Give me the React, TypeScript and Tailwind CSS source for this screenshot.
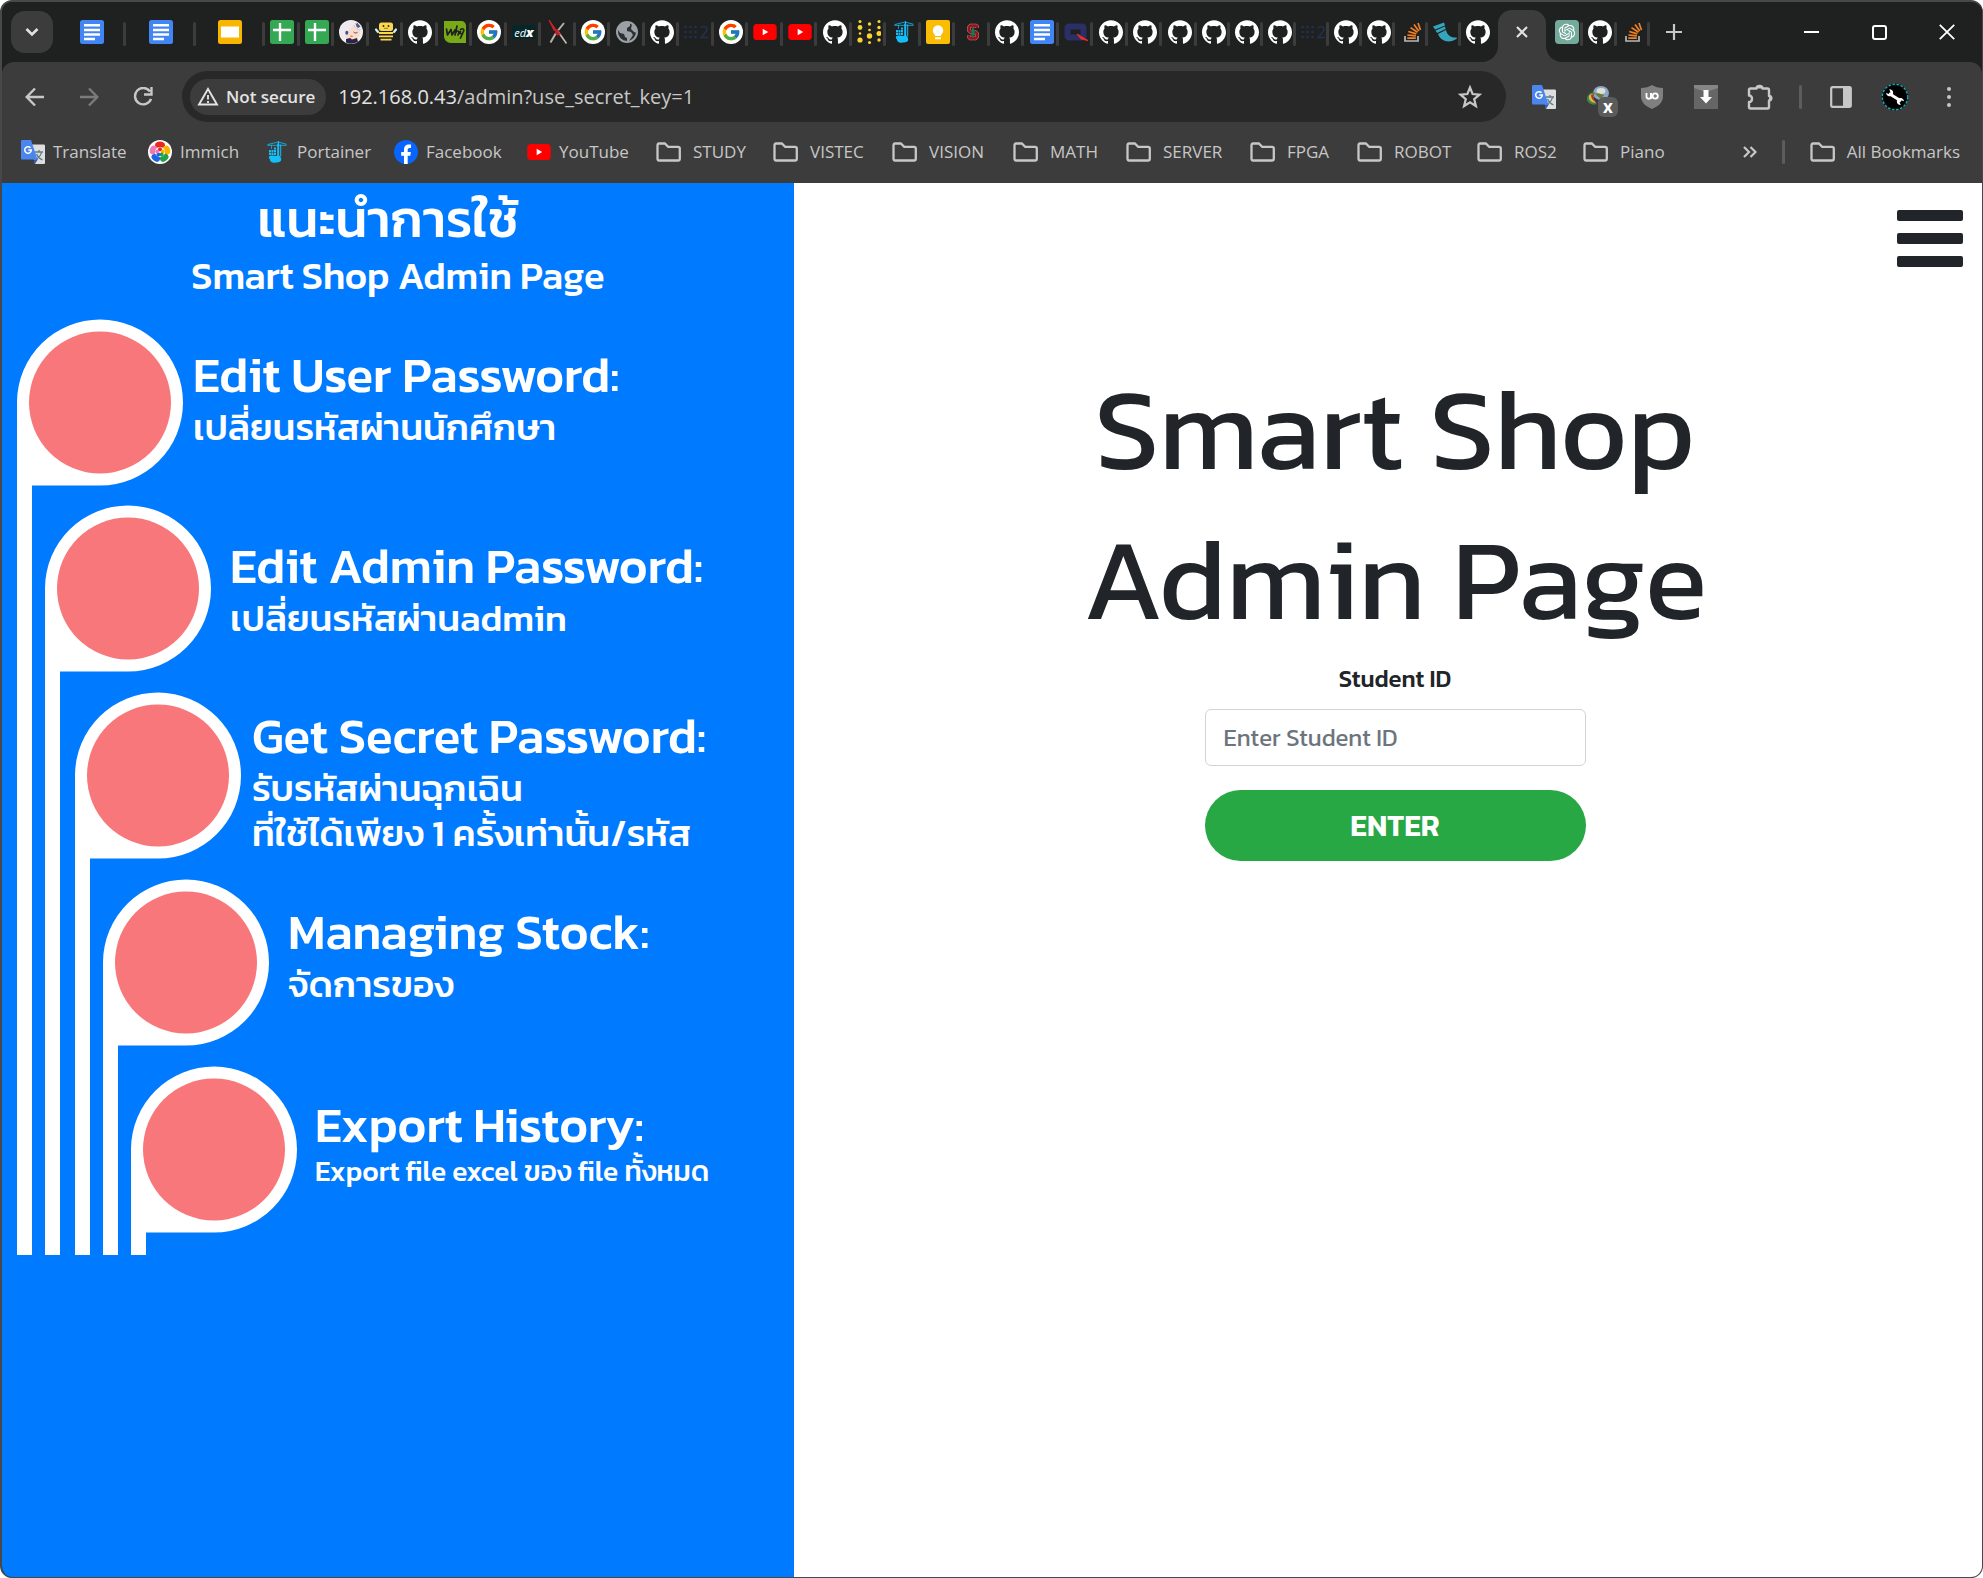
import React from "react";
import type { ReactNode } from "react";
import { SiGithub } from "react-icons/si";
import { FcGoogle } from "react-icons/fc";
import { RiOpenaiFill } from "react-icons/ri";

type IconProps = { className?: string };

function Docs() {
  return (
    <svg viewBox="0 0 24 24" className="size-6">
      <rect width="24" height="24" rx="2.5" fill="#4285f4" />
      <path d="M4 5.3h16M4 10h16M4 14.5h16M4 19h11" stroke="#fff" strokeWidth="2.4" />
    </svg>
  );
}

function Slides() {
  return (
    <svg viewBox="0 0 24 24" className="size-6">
      <rect width="24" height="24" rx="2.5" fill="#f9b600" />
      <rect x="3" y="6.5" width="18" height="11" fill="#fff" />
    </svg>
  );
}

function Sheets() {
  return (
    <svg viewBox="0 0 24 24" className="size-6">
      <rect width="24" height="24" rx="2.5" fill="#34a853" />
      <path d="M10 3v18M3 10h18" stroke="#fff" strokeWidth="2.400" />
    </svg>
  );
}

function Portrait() {
  return (
    <svg viewBox="0 0 24 24" className="size-6">
      <circle cx="12" cy="12" r="12" fill="#f4efee" />
      <path d="M5 13c0-4 3-7 8-7s8 3 8 7-4 7-8 7-8-3-8-7z" fill="#fbdcc8" />
      <path d="M1 9c2-6 7-8.500 12-8 5 0 8 4 9.500 9-4 1-7-1-9-4-1 3-5 5-7 5.500L5.500 20C2 17 0 13 1 9z" fill="#eeeaf0" />
      <path d="M14.500 5c1.500 3 4 5 7 5" stroke="#bfb4c4" strokeWidth="0.700" fill="none" />
      <path d="M18 2.500l3.500 4-2.500 1.500-2-2z" fill="#4d5c94" />
      <path d="M16.500 3l2 1.500-1.500 1z" fill="#b34a5c" />
      <ellipse cx="7.800" cy="12.800" rx="1.500" ry="2" fill="#3553a0" />
      <path d="M14.500 12c1.200 1.200 2.700 1.200 4 .3" stroke="#60405a" strokeWidth="1" fill="none" />
      <ellipse cx="12.500" cy="16.300" rx="1.400" ry="1" fill="#e58a80" />
      <path d="M7 19l4-1 2 1.500 5-1.500 1 3.500c-4 2.500-8 3-12 1z" fill="#2b2448" />
    </svg>
  );
}

function Bee() {
  return (
    <svg viewBox="0 0 24 24" className="size-6">
      <rect x="5" y="2.500" width="14" height="8.500" rx="2.500" fill="#fbd84b" />
      <circle cx="9.500" cy="6" r="0.900" fill="#222" />
      <circle cx="14.500" cy="6" r="0.900" fill="#222" />
      <path d="M10 8.300h4" stroke="#7a6a28" strokeWidth="0.800" />
      <path d="M2 9.500l2 2.500M22 9.500l-2 2.500" stroke="#d8ecef" strokeWidth="2.200" strokeLinecap="round" />
      <path d="M5 13h14M5 16.300h14M6.500 19.600h11" stroke="#fbd84b" strokeWidth="1.800" />
    </svg>
  );
}

function GitHub() {
  return <SiGithub className="size-6 text-white" />;
}

function Leaf() {
  return (
    <svg viewBox="0 0 24 24" className="size-6">
      <path d="M1 1h17c3 0 5 2 5 5v17H8c-4 0-7-3-7-7z" fill="#78a916" />
      <path d="M3.500 9l1 6L8 9.500 9 15l3-5M14 6l-2 9M12.800 12.500c1.200-2 3.500-2 3 0L15 15M17.500 9.500c2-1.500 3.800-.500 3.200 1.500L17.500 18M17.500 11.500l-.5 2 2.500.500" stroke="#1f2120" strokeWidth="1.700" fill="none" strokeLinejoin="round" strokeLinecap="round" />
    </svg>
  );
}

function Google() {
  return (
    <span className="flex size-6 items-center justify-center rounded-full bg-white">
      <FcGoogle className="size-5" />
    </span>
  );
}

function Edx() {
  return (
    <span className="flex h-3.5 w-6 items-center justify-center bg-[#06262a] font-['Open_Sans'] text-[11px] leading-none text-white italic">
      ed<span className="text-[13px] font-extrabold">x</span>
    </span>
  );
}

function CrossMark() {
  return (
    <svg viewBox="0 0 24 24" className="size-6">
      <path d="M18 3L12 10.500M10 13l-5.500 9.500" stroke="#b9b1a8" strokeWidth="2" />
      <path d="M12 11.500l8.500 12" stroke="#c8bdb3" strokeWidth="1.600" />
      <path d="M3 0l7 10 4 4-3 1 2-2-5-3z" fill="#c5222c" stroke="#c5222c" strokeWidth="1.200" />
      <path d="M12 10l-2 4" stroke="#c5222c" strokeWidth="2.500" />
    </svg>
  );
}

function Globe() {
  return (
    <svg viewBox="0 0 24 24" className="size-6">
      <circle cx="12" cy="12" r="10" fill="#2d3032" stroke="#9aa0a6" strokeWidth="2" />
      <path d="M2.500 9C4 5 8 2 12 2l3 1v3l-3 2v3l4 1 2 3-2 3-2 3h-2v-3l-2-1-1-3-4-1z" fill="#9aa0a6" />
      <path d="M17 4l4 4 1 5-3-1-3-3z" fill="#9aa0a6" />
    </svg>
  );
}

function Ros() {
  return (
    <svg viewBox="0 0 24 24" className="size-6">
      <g fill="#22314e">
        {[1.5, 6.5, 11.5].map((x) => [7, 12, 17].map((y) => <circle key={`${x}-${y}`} cx={x} cy={y} r="1.300" />))}
      </g>
      <path d="M17 8c1-2 6-2 6 1 0 2-2 4-6 8.500h7" stroke="#22314e" strokeWidth="1.500" fill="none" />
    </svg>
  );
}

function YouTube() {
  return (
    <svg viewBox="0 0 24 24" className="size-6">
      <rect x="0.300" y="4" width="23.400" height="16" rx="3.500" fill="#f00" />
      <path d="M9.700 8.800v6.400l5.500-3.200z" fill="#fff" />
    </svg>
  );
}

function Dots() {
  return (
    <svg viewBox="0 0 24 24" className="size-6" fill="#fdd32f">
      <circle cx="3" cy="1.500" r="1.500" />
      <circle cx="3" cy="7.500" r="2.400" />
      <circle cx="3" cy="13.500" r="1.300" />
      <circle cx="3" cy="20" r="2.600" />
      <circle cx="12.500" cy="4" r="1.700" />
      <circle cx="12.500" cy="10" r="1.300" />
      <circle cx="12.500" cy="16" r="2.700" />
      <circle cx="12.500" cy="22.500" r="1.500" />
      <circle cx="22" cy="1.500" r="1.500" />
      <circle cx="22" cy="7.500" r="1.700" />
      <circle cx="22" cy="13.500" r="2.500" />
      <circle cx="22" cy="20" r="1.700" />
    </svg>
  );
}

function Portainer() {
  return (
    <svg viewBox="0 0 24 24" className="size-6" fill="#13bef9">
      <path d="M12.200 3.500h2v13h-2zM15.200 4.500h1v12h-1z" />
      <path d="M2.500 4.600L13.200 2l8.300 2.300M2.500 5.300h19" stroke="#13bef9" strokeWidth="0.800" fill="none" />
      <path d="M13 1h1v4h-1zM6 5h0.700v4H6z" />
      <path d="M4 10h2v2.200H4zM6.500 10h2v2.200h-2zM9 10h2v2.200H9zM9 7.400h2v2.200H9zM4 12.700h2v2.200H4zM6.500 12.700h2v2.200h-2zM9 12.700h2v2.200H9z" />
      <path d="M4 16.500c2-1.500 5-1 7-.500 3-1.500 5 .500 5 2.500 1 3-2 4-5 4-4 1-6-1-6-3-1-1-1.500-2-1-3z" />
    </svg>
  );
}

function Keep() {
  return (
    <svg viewBox="0 0 24 24" className="size-6">
      <rect width="24" height="24" rx="2" fill="#fbbc04" />
      <circle cx="12" cy="10.500" r="5.200" fill="#fff" />
      <path d="M9 13h6v3H9zM9 17.200h6v2H9z" fill="#fff" />
    </svg>
  );
}

function Stanford() {
  return (
    <svg viewBox="-3 -3 30 30" className="size-6">
      <path d="M17 7V5l-1.500-1H9L7 6v4l2 2h6l2 2v4l-2 2H8.500L7 18.500V16" stroke="#c9787c" strokeWidth="4.500" fill="none" />
      <path d="M17 7V5l-1.500-1H9L7 6v4l2 2h6l2 2v4l-2 2H8.500L7 18.500V16" stroke="#981318" strokeWidth="3.200" fill="none" />
      <path d="M12 5l2.500 6-1 1 1.500 4-2.200.500V19h-1.600v-2.500L9 16l1.500-4-1-1z" fill="#0f7a5a" />
    </svg>
  );
}

function QMark() {
  return (
    <svg viewBox="0 0 24 24" className="size-6">
      <rect x="3.500" y="6.500" width="16" height="11" rx="1.500" fill="none" stroke="#2a2f66" strokeWidth="6" />
      <path d="M13 14l11 6.500-7-1.500z" fill="#ee2b2b" stroke="#ee2b2b" />
    </svg>
  );
}

function StackOverflow() {
  return (
    <svg viewBox="0 0 24 24" className="size-6" fill="none">
      <path d="M5 16v5h13v-5" stroke="#b7b9bb" strokeWidth="1.700" />
      <path d="M7.300 18.200h8.500M7.400 15l8.400.900M8.300 11.500l8 2.400M10.500 7.600l7 4.700M14 4.500l4.800 6.500M18 3l2.500 7" stroke="#f48024" strokeWidth="1.700" />
    </svg>
  );
}

function Flask() {
  return (
    <svg viewBox="0 0 24 24" className="size-6" fill="#35a5bd">
      <path d="M0 6.500l11-4 1 3L2 9.500zM2.500 10.500L12 6.500l.600 2.500-8.500 4zM5 14l8-4c1 5 5 8 10.500 7.500l.500 1C17 23.500 8 22 5 14z" />
    </svg>
  );
}

function ChatGpt() {
  return (
    <span className="flex size-6 items-center justify-center rounded-sm bg-[#74aa9c]">
      <RiOpenaiFill className="size-5 text-white" />
    </span>
  );
}

function Translate() {
  return (
    <svg viewBox="0 0 24 24" className="size-6">
      <path d="M10 4.500h12.500c1 0 1.500.500 1.500 1.500v16.500c0 1-.500 1.500-1.500 1.500H14z" fill="#dedede" />
      <path d="M14 12h8M18 10v2M20.500 12c-.500 3-3 6-5.500 7.500M15.500 14c1 2.500 3.500 5 6 6" stroke="#607d8b" strokeWidth="1.300" fill="none" />
      <path d="M12.500 19.500L17 19l-3 5z" fill="#3257b5" />
      <path d="M1.500 0H10l6.500 19.500h-15C.500 19.500 0 19 0 18V1.500C0 .500.500 0 1.500 0z" fill="#4a86ee" />
      <path d="M9.500 7.800A3.300 3.300 0 1 0 10.300 10H7.300" stroke="#fff" strokeWidth="1.500" fill="none" />
    </svg>
  );
}

function Immich() {
  return (
    <svg viewBox="0 0 24 24" className="size-6">
      <circle cx="12" cy="12" r="12" fill="#fff" />
      <ellipse cx="12" cy="5" rx="5" ry="3.400" fill="#e8281e" />
      <ellipse cx="18.700" cy="10" rx="3.400" ry="4.600" fill="#f9b400" transform="rotate(-18 18.700 10)" />
      <ellipse cx="16.200" cy="17.800" rx="4.600" ry="3.400" fill="#22a04a" transform="rotate(-36 16.200 17.800)" />
      <ellipse cx="7.800" cy="17.800" rx="4.600" ry="3.400" fill="#1e66e0" transform="rotate(36 7.800 17.800)" />
      <ellipse cx="5.300" cy="10" rx="3.400" ry="4.600" fill="#ed79b5" transform="rotate(18 5.300 10)" />
      <circle cx="12" cy="12" r="5" fill="#fff" />
      <circle cx="12" cy="9.300" r="2" fill="#e8281e" />
      <circle cx="14.700" cy="11.500" r="2" fill="#f9b400" />
      <circle cx="13.600" cy="14.400" r="2" fill="#22a04a" />
      <circle cx="10.400" cy="14.400" r="2" fill="#1e66e0" />
      <circle cx="9.300" cy="11.500" r="2" fill="#ed79b5" />
    </svg>
  );
}

function Facebook() {
  return (
    <svg viewBox="0 0 24 24" className="size-6">
      <circle cx="12" cy="12" r="12" fill="#0866ff" />
      <path d="M10 24v-8.200H7.200V12H10v-2c0-4 2-5.600 5-5.600.900 0 1.500.100 2 .200v3.300h-1.400c-1.400 0-1.900.700-1.900 2V12h3.200l-.600 3.800h-2.600V24z" fill="#fff" />
    </svg>
  );
}

function Folder({ className = "" }: IconProps) {
  return (
    <svg viewBox="0 0 25 20" className={`h-5 w-[25px] ${className}`} fill="none" stroke="#c7c7c7" strokeWidth="2.300">
      <path d="M1.500 3.500C1.500 2 2 1.500 3 1.500h5.800l3.400 3.300H22c1 0 1.800.700 1.800 1.700v10.300c0 1-.800 1.700-1.800 1.700H3c-1 0-1.500-.700-1.500-1.700z" />
    </svg>
  );
}

function Earth() {
  return (
    <span className="relative flex size-6">
      <svg viewBox="0 0 24 24" className="size-6">
        <ellipse cx="15" cy="8" rx="8" ry="7" fill="#8ba6c8" />
        <ellipse cx="15" cy="6" rx="4.500" ry="3" fill="#e1e0d2" />
        <path d="M9 9c3-2 6 0 9 1l-3 4z" fill="#697a3a" />
        <path d="M1 12c3-6 7-5 8-4-2 3-2 8 2 11-5 2-11-1-10-7z" fill="#40843f" />
        <path d="M3 11c2-3 5-2 5-1-1 3 0 6 2 8-4 0-8-3-7-7z" fill="#d8bb4b" />
        <path d="M5 10l3-1c-1 3 0 6 2 8-3-1-5-4-5-7z" fill="#ae302a" />
      </svg>
      <span className="absolute top-3 left-3 flex size-5 items-center justify-center rounded-md bg-[#5b5b5b] font-['Open_Sans'] text-[17px] leading-none font-bold text-white">
        x
      </span>
    </span>
  );
}

function Shield() {
  return (
    <svg viewBox="0 0 24 24" className="size-6">
      <path d="M12 0c3 2 7 3 11 3v8c0 6-4 10-11 13C5 21 1 17 1 11V3c4 0 8-1 11-3z" fill="#808080" />
      <path d="M6.500 8v3.500c0 3 4.500 3 4.500 0V8" stroke="#fff" strokeWidth="1.800" fill="none" />
      <circle cx="15.200" cy="11" r="2.600" stroke="#fff" strokeWidth="1.800" fill="none" />
      <path d="M11 8v6" stroke="#fff" strokeWidth="1.800" />
    </svg>
  );
}

function DownloadBox() {
  return (
    <svg viewBox="0 0 24 24" className="size-6">
      <rect width="24" height="24" fill="#666" />
      <path d="M0 0h24v3l-12 4L0 3z" fill="#858585" />
      <path d="M9.500 5h5v7h3.500l-6 6.500L6 12h3.500z" fill="#fff" />
    </svg>
  );
}

function Puzzle() {
  return (
    <svg viewBox="0 0 26 26" className="size-[26px]">
      <path d="M3.500 4.500h6c0-3.500 6-3.500 6 0h5c1 0 1.500.500 1.500 1.500v6c3 0 3 4.500 0 4.500v6.500c0 1-.500 1.500-1.500 1.500h-17C2.500 24.500 2 24 2 23v-5c4 0 4-6.500 0-6.500V6c0-1 .500-1.500 1.500-1.500z" fill="none" stroke="#c7c7c7" strokeWidth="2.400" strokeLinejoin="round" />
      <path d="M9.500 4.500c0-4.500 6-4.500 6 0zM22 12c4.500 0 4.500 4.500 0 4.500z" fill="#c7c7c7" />
    </svg>
  );
}

function SidePanel() {
  return (
    <svg viewBox="0 0 22 22" className="size-[22px]">
      <rect x="1.200" y="1.200" width="19.600" height="19.600" rx="1.500" fill="none" stroke="#c7c7c7" strokeWidth="2.200" />
      <path d="M13 1h8v20h-8z" fill="#c7c7c7" />
    </svg>
  );
}

function Avatar() {
  return (
    <svg viewBox="0 0 28 28" className="size-7">
      <circle cx="14" cy="14" r="13.500" fill="#071617" />
      <circle cx="14" cy="14" r="12.800" fill="none" stroke="#25a9b0" strokeWidth="1.300" strokeDasharray="2.500 1.600" />
      <circle cx="14" cy="14" r="11.300" fill="#000" />
      <path d="M8 10.500l12 7.500" stroke="#fff" strokeWidth="3" />
      <path d="M8.300 6.300c2.400 0 4 1.400 3.900 3.700-.2 2.400-2.200 3.700-4.400 3.200-1.500-.4-2.600-1.600-2.800-3.200l2.800 1 1.700-1.500z" fill="#fff" />
      <path d="M19.700 21.900c-2.400 0-4-1.400-3.900-3.700.2-2.400 2.200-3.700 4.400-3.200 1.500.4 2.600 1.600 2.800 3.200l-2.800-1-1.700 1.500z" fill="#fff" />
    </svg>
  );
}

type TabDef = { name: string; icon: () => ReactNode };
const t = (name: string, icon: () => ReactNode): TabDef => ({ name, icon });
const gh = t("GitHub", GitHub);

const pinned = [t("Docs", Docs), t("Docs", Docs), t("Slides", Slides)];
const middle = [
  t("Sheets", Sheets), t("Sheets", Sheets), t("Portrait", Portrait), t("Bee", Bee), gh, t("Leaf", Leaf),
  t("Google", Google), t("edX", Edx), t("Cross", CrossMark), t("Google", Google), t("Site", Globe), gh,
  t("ROS 2", Ros), t("Google", Google), t("YouTube", YouTube), t("YouTube", YouTube), gh, t("Dots", Dots),
  t("Portainer", Portainer), t("Keep", Keep), t("Stanford", Stanford), gh, t("Docs", Docs), t("Q", QMark),
  gh, gh, gh,
];
const late = [gh, gh, gh, t("ROS 2", Ros), gh, gh, t("Stack Overflow", StackOverflow), t("Flask", Flask), gh];
const after = [t("ChatGPT", ChatGpt), gh, t("Stack Overflow", StackOverflow)];

function Tabs({ items, className, lastLine = true }: { items: TabDef[]; className: string; lastLine?: boolean }) {
  return (
    <div className={`flex h-full items-center ${className}`}>
      {items.map((item, i) => (
        <button key={i} aria-label={item.name} className="relative flex h-full min-w-0 flex-1 items-center justify-center">
          {item.icon()}
          {(lastLine || i < items.length - 1) && (
            <span className="absolute top-5 right-0 h-6 w-[3px] rounded-full bg-[#3c3c3c]" />
          )}
        </button>
      ))}
    </div>
  );
}

function TabStrip() {
  return (
    <div className="flex h-[60px] bg-[#1f2120]">
      <button aria-label="Search tabs" className="mt-[9px] ml-[9px] flex size-[42px] shrink-0 items-center justify-center rounded-[14px] bg-[#3c3c3c]">
        <svg viewBox="0 0 14 10" className="h-2.5 w-3.5">
          <path d="M1.500 2l5.500 5.500L12.500 2" stroke="#e3e3e3" strokeWidth="2.600" fill="none" />
        </svg>
      </button>
      <Tabs items={pinned} className="ml-1 w-[208px] shrink-0" />
      <Tabs items={middle} className="w-[932px] shrink-0" />
      <Tabs items={late} className="w-[297px] shrink-0" lastLine={false} />
      <div className="relative ml-1 flex h-full w-12 shrink-0 items-end">
        <span className="absolute bottom-0 -left-4 size-4 bg-[#3c3c3c]">
          <span className="block size-4 rounded-br-2xl bg-[#1f2120]" />
        </span>
        <span className="absolute -right-4 bottom-0 size-4 bg-[#3c3c3c]">
          <span className="block size-4 rounded-bl-2xl bg-[#1f2120]" />
        </span>
        <button aria-label="Close tab" className="flex h-[52px] w-12 items-center justify-center rounded-t-[14px] bg-[#3c3c3c] pb-2">
          <svg viewBox="0 0 12 12" className="size-3">
            <path d="M1 1l10 10M11 1L1 11" stroke="#e3e3e3" strokeWidth="2.200" />
          </svg>
        </button>
      </div>
      <Tabs items={after} className="ml-1 w-[100px] shrink-0" />
      <button aria-label="New tab" className="ml-2 flex w-8 items-center justify-center">
        <svg viewBox="0 0 16 16" className="size-4">
          <path d="M8 0v16M0 8h16" stroke="#c7c7c7" strokeWidth="2.200" />
        </svg>
      </button>
      <div className="mr-px ml-auto flex shrink-0">
        <button aria-label="Minimize" className="flex w-[68px] items-center justify-center">
          <span className="h-0.5 w-[15px] bg-white" />
        </button>
        <button aria-label="Maximize" className="flex w-[68px] items-center justify-center">
          <span className="size-[15px] rounded-[3px] border-2 border-white" />
        </button>
        <button aria-label="Close" className="flex w-[68px] items-center justify-center">
          <svg viewBox="0 0 16 16" className="size-4">
            <path d="M.800.800l14.400 14.400M15.200.800L.800 15.200" stroke="#fff" strokeWidth="1.800" />
          </svg>
        </button>
      </div>
    </div>
  );
}

function NavButton({ label, d, dim = false }: { label: string; d: string; dim?: boolean }) {
  return (
    <button aria-label={label} className="flex h-10 w-[54px] items-center justify-center">
      <svg viewBox="0 0 20 20" className={dim ? "size-5 text-[#7b7b7b]" : "size-5 text-[#c7c7c7]"} fill="none" stroke="currentColor" strokeWidth="2.400">
        <path d={d} />
      </svg>
    </button>
  );
}

function Toolbar() {
  return (
    <div className="flex h-[69px] items-center rounded-t-xl bg-[#3c3c3c] pl-1.5">
      <NavButton label="Back" d="M19 10H2.500M10 1.500L1.700 10l8.300 8.500" />
      <NavButton label="Forward" dim d="M1 10h16.500M10 1.500l8.300 8.500-8.300 8.500" />
      <NavButton label="Reload" d="M17 4.500A8.200 8.200 0 1 0 18 11.800M18.500 0v7.500H11" />
      <div className="ml-3 flex h-[51px] min-w-0 flex-1 items-center rounded-full bg-[#282828] pr-6 pl-2">
        <button className="flex h-9 shrink-0 items-center gap-[7px] rounded-full bg-[#3c3c3c] pr-[11px] pl-[7px] text-[17px] font-semibold whitespace-nowrap text-[#e3e3e3]">
          <svg viewBox="0 0 22 19" className="h-[19px] w-[22px]" fill="none" stroke="#e3e3e3" strokeWidth="1.900">
            <path d="M11 2L20 17.500H2z" />
            <path d="M11 8v4.500M11 14v2" />
          </svg>
          Not secure
        </button>
        <div className="ml-3 min-w-0 flex-1 text-[20px] whitespace-nowrap text-[#c7c7c7]">
          <span className="text-[#e3e3e3]">192.168.0.43</span>/admin?use_secret_key=1
        </div>
        <button aria-label="Bookmark this page" className="shrink-0">
          <svg viewBox="0 0 24 24" className="size-6" fill="none" stroke="#c7c7c7" strokeWidth="2.200">
            <path d="M12 2.500l2.600 6.500 6.900.600-5.300 4.500 1.700 6.900-5.900-3.700L6.100 21l1.700-6.900-5.300-4.500 6.900-.600z" />
          </svg>
        </button>
      </div>
      <div className="flex shrink-0 items-center pl-[11px]">
        <button aria-label="Translate" className="flex w-[54px] justify-center"><Translate /></button>
        <button aria-label="Earth" className="flex w-[54px] justify-center"><Earth /></button>
        <button aria-label="Ad blocker" className="flex w-[54px] justify-center"><Shield /></button>
        <button aria-label="Downloader" className="flex w-[54px] justify-center"><DownloadBox /></button>
        <button aria-label="Extensions" className="flex w-[54px] justify-center"><Puzzle /></button>
        <span className="mx-3 h-6 w-[3px] rounded-full bg-[#5d5d5d]" />
        <button aria-label="Side panel" className="flex w-[54px] justify-center"><SidePanel /></button>
        <button aria-label="Profile" className="flex w-[54px] justify-center"><Avatar /></button>
        <button aria-label="Menu" className="mr-1.5 flex w-[54px] flex-col items-center gap-1">
          <span className="size-1 rounded-full bg-[#c7c7c7]" />
          <span className="size-1 rounded-full bg-[#c7c7c7]" />
          <span className="size-1 rounded-full bg-[#c7c7c7]" />
        </button>
      </div>
    </div>
  );
}

const sites = [
  { label: "Translate", icon: <Translate />, width: "w-[127px]" },
  { label: "Immich", icon: <Immich />, width: "w-[117px]" },
  { label: "Portainer", icon: <Portainer />, width: "w-[129px]" },
  { label: "Facebook", icon: <Facebook />, width: "w-[133px]" },
  { label: "YouTube", icon: <YouTube />, width: "w-[129px]" },
];

const folders = [
  { label: "STUDY", width: "w-[117px]" },
  { label: "VISTEC", width: "w-[119px]" },
  { label: "VISION", width: "w-[121px]" },
  { label: "MATH", width: "w-[113px]" },
  { label: "SERVER", width: "w-[124px]" },
  { label: "FPGA", width: "w-[107px]" },
  { label: "ROBOT", width: "w-[120px]" },
  { label: "ROS2", width: "w-[106px]" },
  { label: "Piano", width: "w-[110px]" },
];

function Bookmarks() {
  return (
    <div className="flex h-[52px] items-center bg-[#3c3c3c] pb-2.5 pl-[19px] text-[17px] whitespace-nowrap text-[#c7c7c7]">
      {sites.map((s) => (
        <a key={s.label} href="#" className={`flex shrink-0 items-center gap-2 ${s.width}`}>
          {s.icon}
          {s.label}
        </a>
      ))}
      {folders.map((f) => (
        <button key={f.label} className={`flex shrink-0 items-center gap-3 ${f.width}`}>
          <Folder />
          {f.label}
        </button>
      ))}
      <div className="mr-[22px] ml-auto flex shrink-0 items-center">
        <button aria-label="More bookmarks">
          <svg viewBox="0 0 14 12" className="h-3 w-3.5" fill="none" stroke="#c7c7c7" strokeWidth="2.200">
            <path d="M1 1l5 5-5 5M7.500 1l5 5-5 5" />
          </svg>
        </button>
        <span className="mx-[25px] h-6 w-[3px] rounded-full bg-[#5d5d5d]" />
        <button className="flex items-center gap-3">
          <Folder />
          All Bookmarks
        </button>
      </div>
    </div>
  );
}

const steps = [
  { title: "Edit User Password:", lines: ["เปลี่ยนรหัสผ่านนักศึกษา"], place: "pt-[26px] pl-[191px]", small: false },
  { title: "Edit Admin Password:", lines: ["เปลี่ยนรหัสผ่านadmin"], place: "pt-[30px] pl-[228px]", small: false },
  { title: "Get Secret Password:", lines: ["รับรหัสผ่านฉุกเฉิน", "ที่ใช้ได้เพียง 1 ครั้งเท่านั้น/รหัส"], place: "pt-[13px] pl-[250px]", small: false },
  { title: "Managing Stock:", lines: ["จัดการของ"], place: "pt-[22px] pl-[286px]", small: false },
  { title: "Export History:", lines: ["Export file excel ของ file ทั้งหมด"], place: "pt-[28px] pl-[313px]", small: true },
];

const pins = [
  { x: 0, y: 0 },
  { x: 28, y: 186 },
  { x: 58, y: 373 },
  { x: 86, y: 560 },
  { x: 114, y: 747 },
];

function PinArt() {
  return (
    <svg viewBox="0 0 280 936" className="absolute top-0 left-[15px] h-[936px] w-[280px]" aria-hidden="true">
      {pins.map((p) => (
        <g key={p.x}>
          <path d={`M${p.x} 936V${p.y + 83}a83 83 0 1 1 83 83.500H${p.x + 15}V936z`} fill="#fff" />
          <circle cx={p.x + 83} cy={p.y + 83.5} r="71" fill="#f8777b" />
        </g>
      ))}
    </svg>
  );
}

function Guide() {
  return (
    <aside className="w-[792px] shrink-0 bg-[#007aff] font-medium text-white [font-variant-ligatures:none]">
      <header className="flex h-[136px] flex-col items-center">
        <h2 className="pr-5 text-[52px] leading-[72px]">แนะนำการใช้</h2>
        <p className="text-[38px] leading-[42px]">Smart Shop Admin Page</p>
      </header>
      <div className="relative h-[936px]">
        <PinArt />
        <ol>
          {steps.map((s) => (
            <li key={s.title} className={`relative flex h-[187px] flex-col whitespace-nowrap ${s.place}`}>
              <h3 className="text-[49px] leading-[60px]">{s.title}</h3>
              {s.lines.map((l) => (
                <p key={l} className={s.small ? "text-[28px] leading-8" : "text-[37px] leading-[45px]"}>
                  {l}
                </p>
              ))}
            </li>
          ))}
        </ol>
      </div>
    </aside>
  );
}

function Login() {
  return (
    <main className="relative flex flex-1 flex-col items-center bg-white pl-3.5 text-[#212529]">
      <button aria-label="Open menu" className="absolute top-[27px] right-[19px] flex w-[66px] flex-col gap-3">
        <span className="h-[11px] rounded-xs bg-[#212529]" />
        <span className="h-[11px] rounded-xs bg-[#212529]" />
        <span className="h-[11px] rounded-xs bg-[#212529]" />
      </button>
      <h1 className="mt-[170px] text-center text-[116px] leading-[150px]">
        Smart Shop
        <br />
        Admin Page
      </h1>
      <form className="mt-[9px] flex w-[381px] flex-col" onSubmit={(e) => e.preventDefault()}>
        <label htmlFor="student-id" className="text-center text-[24px] leading-[34px] font-medium">
          Student ID
        </label>
        <input
          id="student-id"
          placeholder="Enter Student ID"
          className="mt-[13px] h-[57px] rounded-md border border-[#ced4da] px-[18px] text-[24px] outline-none placeholder:text-[#6c757d]"
        />
        <button type="submit" className="mt-6 h-[71px] rounded-full bg-[#28a745] text-[30px] font-semibold text-white">
          ENTER
        </button>
      </form>
    </main>
  );
}

export default function App() {
  return (
    <div className="flex min-h-screen flex-col overflow-hidden rounded-xl border-t-2 border-r border-b border-l-2 border-[#484848] bg-[#1f2120] font-['Open_Sans','Noto_Sans',sans-serif]">
      <TabStrip />
      <Toolbar />
      <Bookmarks />
      <div className="flex flex-1 font-['Kanit','Noto_Sans',sans-serif]">
        <Guide />
        <Login />
      </div>
    </div>
  );
}
